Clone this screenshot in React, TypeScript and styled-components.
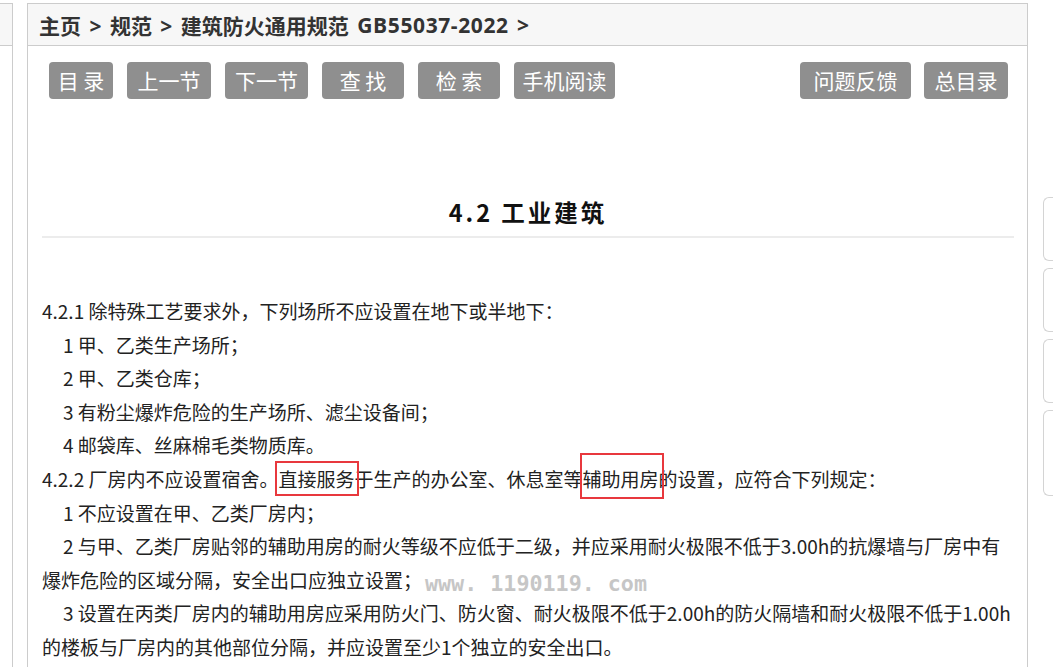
import React from "react";
import styled, { createGlobalStyle } from "styled-components";

const GlobalStyle = createGlobalStyle`
  html, body {
    margin: 0;
    padding: 0;
    background: #fff;
    overflow: hidden;
  }
  body {
    font-family: "Noto Sans CJK SC", "Microsoft YaHei", sans-serif;
  }
`;

export default function App() {
  const leftButtons = [
    { label: "目 录", w: 64 },
    { label: "上一节", w: 84 },
    { label: "下一节", w: 83 },
    { label: "查 找", w: 82 },
    { label: "检 索", w: 82 },
    { label: "手机阅读", w: 101 },
  ];
  const rightButtons = [
    { label: "问题反馈", w: 111 },
    { label: "总目录", w: 84 },
  ];
  const railCards = [62, 62, 62, 84];

  return (
    <Page>
      <GlobalStyle />
      <LeftPanel>
        <PanelHead />
      </LeftPanel>

      <MainPanel>
        <Breadcrumb>
          主页 &gt; 规范 &gt; 建筑防火通用规范 <Code>GB55037-2022</Code> &gt;
        </Breadcrumb>

        <Toolbar>
          {leftButtons.map((b) => (
            <NavButton key={b.label} $w={b.w}>
              {b.label}
            </NavButton>
          ))}
          <RightGroup>
            {rightButtons.map((b) => (
              <NavButton key={b.label} $w={b.w}>
                {b.label}
              </NavButton>
            ))}
          </RightGroup>
        </Toolbar>

        <Content>
          <Title>4.2 工业建筑</Title>
          <Article>
            <Para>4.2.1 除特殊工艺要求外，下列场所不应设置在地下或半地下：</Para>
            <Para $indent>1 甲、乙类生产场所；</Para>
            <Para $indent>2 甲、乙类仓库；</Para>
            <Para $indent>3 有粉尘爆炸危险的生产场所、滤尘设备间；</Para>
            <Para $indent>4 邮袋库、丝麻棉毛类物质库。</Para>
            <Para>
              4.2.2 厂房内不应设置宿舍。
              <Mark $top={4} $bottom={4}>直接服务</Mark>
              于生产的办公室、休息室等
              <Mark $top={12} $bottom={7}>辅助用房</Mark>
              的设置，应符合下列规定：
            </Para>
            <Para $indent>1 不应设置在甲、乙类厂房内；</Para>
            <Para $indent>
              2 与甲、乙类厂房贴邻的辅助用房的耐火等级不应低于二级，并应采用耐火极限不低于3.00h的抗爆墙与厂房中有爆炸危险的区域分隔，安全出口应独立设置；
            </Para>
            <Para $indent>
              3 设置在丙类厂房内的辅助用房应采用防火门、防火窗、耐火极限不低于2.00h的防火隔墙和耐火极限不低于1.00h的楼板与厂房内的其他部位分隔，并应设置至少1个独立的安全出口。
            </Para>
          </Article>
          <Watermark>www. 1190119. com</Watermark>
        </Content>
      </MainPanel>

      <RightRail>
        {railCards.map((h, i) => (
          <RailCard key={i} $h={h} />
        ))}
      </RightRail>
    </Page>
  );
}

const Page = styled.div`
  display: flex;
  align-items: flex-start;
  width: 1053px;
  height: 667px;
  overflow: hidden;
  padding-top: 3px;
  box-sizing: border-box;
`;

const LeftPanel = styled.div`
  flex: 0 0 12px;
  height: 700px;
  border-top: 1px solid #ccc;
  border-right: 1px solid #ccc;
`;

const PanelHead = styled.div`
  height: 41px;
  background: #f7f7f7;
  border-bottom: 1px solid #ccc;
`;

const MainPanel = styled.div`
  flex: 0 0 1001px;
  box-sizing: border-box;
  margin-left: 14px;
  min-height: 700px;
  border: 1px solid #ccc;
  border-bottom: none;
`;

const Breadcrumb = styled.div`
  height: 41px;
  display: flex;
  align-items: center;
  padding-left: 11px;
  background: #f7f7f7;
  border-bottom: 1px solid #ccc;
  font-family: "Open Sans", "Noto Sans CJK SC", sans-serif;
  font-size: 21px;
  font-weight: 700;
  color: #333;
  white-space: pre;
  word-spacing: 3px;
`;

const Code = styled.span`
  letter-spacing: 0.6px;
`;

const Toolbar = styled.div`
  display: flex;
  gap: 14px;
  padding: 16px 19px 0 21px;
`;

const RightGroup = styled.div`
  display: flex;
  gap: 13px;
  margin-left: auto;
`;

const NavButton = styled.button<{ $w: number }>`
  width: ${(p) => p.$w}px;
  height: 37px;
  padding: 0;
  border: none;
  border-radius: 4px;
  background: #8f8f8f;
  color: #fff;
  font-family: inherit;
  font-size: 21px;
  line-height: 37px;
  white-space: pre;
  cursor: pointer;
`;

const Content = styled.div`
  position: relative;
  padding: 98px 13px 0 14px;
`;

const Title = styled.h2`
  margin: 0;
  padding-bottom: 9px;
  border-bottom: 2px solid #ececec;
  text-align: center;
  font-size: 23.5px;
  font-weight: 700;
  letter-spacing: 3px;
  line-height: 30px;
  color: #111;
`;

const Article = styled.div`
  margin-top: 56px;
  font-size: 19px;
  line-height: 33.6px;
  color: #222;
`;

const Para = styled.p<{ $indent?: boolean }>`
  margin: 0;
  text-indent: ${(p) => (p.$indent ? "21px" : "0")};
`;

const Mark = styled.span<{ $top: number; $bottom: number }>`
  position: relative;
  &::after {
    content: "";
    position: absolute;
    left: -3px;
    right: -5px;
    top: -${(p) => p.$top}px;
    bottom: -${(p) => p.$bottom}px;
    border: 2px solid #e8383d;
    pointer-events: none;
  }
`;

const Watermark = styled.div`
  position: absolute;
  left: 397px;
  top: 473px;
  z-index: 1;
  font-family: "DejaVu Sans Mono", monospace;
  font-size: 21.7px;
  font-weight: 700;
  line-height: 24px;
  color: #c6c6c6;
  white-space: pre;
  pointer-events: none;
`;

const RightRail = styled.div`
  flex: 0 0 40px;
  margin-left: 15px;
  padding-top: 194px;
  display: flex;
  flex-direction: column;
  gap: 7px;
`;

const RailCard = styled.div<{ $h: number }>`
  height: ${(p) => p.$h}px;
  border: 1px solid #d4d4d4;
  border-right: none;
  border-radius: 6px 0 0 6px;
`;
